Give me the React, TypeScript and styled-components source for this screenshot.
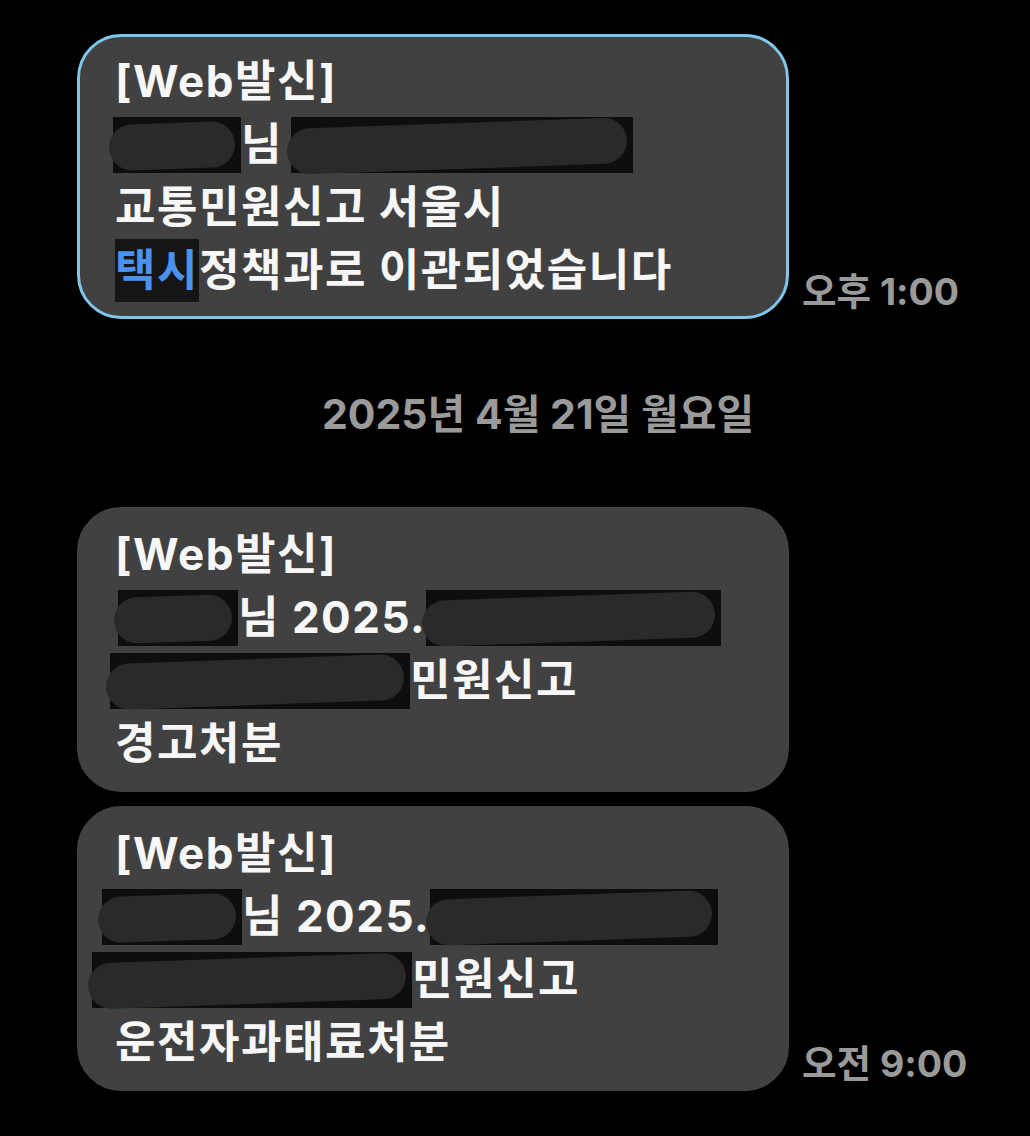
import React from "react";
import styled, { createGlobalStyle } from "styled-components";

const Global = createGlobalStyle`
  html, body { margin: 0; padding: 0; background: #000; }
  body { font-family: "Inter", "Noto Sans CJK KR", "Noto Sans", sans-serif; }
`;

const Page = styled.div`
  width: 1030px;
  min-height: 1136px;
  background: #000;
  padding: 34px 0 0 77px;
  box-sizing: border-box;
  display: flex;
  flex-direction: column;
`;

const Row = styled.div<{ $gap?: number }>`
  display: flex;
  align-items: flex-end;
  gap: 13px;
  margin-top: ${(p) => p.$gap ?? 0}px;
`;

const Bubble = styled.div<{ $selected?: boolean }>`
  width: 712px;
  height: 285px;
  box-sizing: border-box;
  background: #414141;
  border-radius: 44px;
  border: 3px solid ${(p) => (p.$selected ? "#7fc7ea" : "#414141")};
  padding: 13px 20px 13px 35px;
  display: flex;
  flex-direction: column;
`;

const Line = styled.div`
  color: #f7f7f7;
  font-size: 44px;
  font-weight: 700;
  letter-spacing: 1.5px;
  line-height: 63px;
  height: 63px;
  white-space: nowrap;
  display: flex;
  align-items: center;
`;

const Redact = styled.span<{ $w: number; $h?: number; $ml?: number }>`
  display: inline-block;
  position: relative;
  width: ${(p) => p.$w}px;
  height: ${(p) => p.$h ?? 56}px;
  margin-left: ${(p) => p.$ml ?? 0}px;
  background: #0e0e0e;
  &::after {
    content: "";
    position: absolute;
    left: -4px;
    right: 6px;
    top: 6px;
    bottom: 4px;
    background: #2a2a2a;
    border-radius: 24px;
    transform: rotate(-2deg);
  }
`;

const Highlight = styled.span`
  background: #151515;
  color: #4a92f2;
`;

const Time = styled.div`
  color: #9a9a9a;
  font-size: 37.5px;
  font-weight: 700;
  line-height: 40px;
  padding-bottom: 7px;
  white-space: nowrap;
`;

const DateLabel = styled.div`
  color: #9a9a9a;
  font-size: 41px;
  font-weight: 700;
  line-height: 44px;
  margin: 73px 0 0 245px;
  white-space: nowrap;
`;

const Sp = styled.span`
  display: inline-block;
  width: 8px;
`;

export default function App() {
  return (
    <>
      <Global />
      <Page>
        <Row>
          <Bubble $selected>
            <Line>[Web발신]</Line>
            <Line>
              <Redact $w={128} $ml={-2} />
              님<Sp />
              <Redact $w={342} />
            </Line>
            <Line>교통민원신고 서울시</Line>
            <Line>
              <Highlight>택시</Highlight>정책과로 이관되었습니다
            </Line>
          </Bubble>
          <Time>오후 1:00</Time>
        </Row>
        <DateLabel>2025년 4월 21일 월요일</DateLabel>
        <Row $gap={71}>
          <Bubble>
            <Line>[Web발신]</Line>
            <Line>
              <Redact $w={120} $ml={3} />
              님 2025.
              <Redact $w={295} />
            </Line>
            <Line>
              <Redact $w={300} $ml={-5} />
              민원신고
            </Line>
            <Line>경고처분</Line>
          </Bubble>
        </Row>
        <Row $gap={14}>
          <Bubble>
            <Line>[Web발신]</Line>
            <Line>
              <Redact $w={140} $ml={-13} />
              님 2025.
              <Redact $w={288} />
            </Line>
            <Line>
              <Redact $w={320} $ml={-23} />
              민원신고
            </Line>
            <Line>운전자과태료처분</Line>
          </Bubble>
          <Time>오전 9:00</Time>
        </Row>
      </Page>
    </>
  );
}
